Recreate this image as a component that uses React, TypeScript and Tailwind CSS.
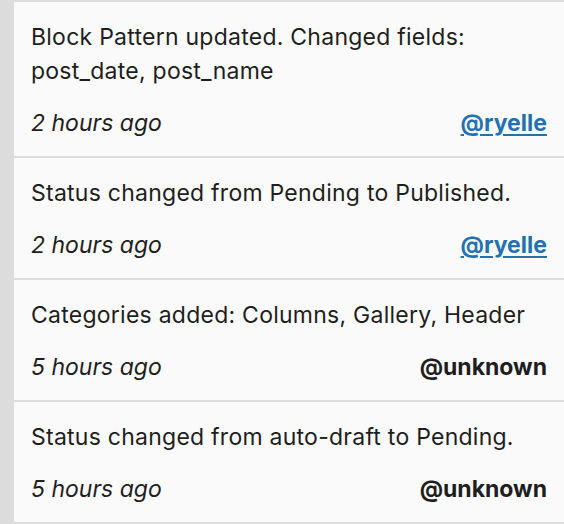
import React from "react";

type Item = { text: string; time: string; user: string; link: boolean };

const items: Item[] = [
  { text: "Block Pattern updated. Changed fields: post_date, post_name", time: "2 hours ago", user: "@ryelle", link: true },
  { text: "Status changed from Pending to Published.", time: "2 hours ago", user: "@ryelle", link: true },
  { text: "Categories added: Columns, Gallery, Header", time: "5 hours ago", user: "@unknown", link: false },
  { text: "Status changed from auto-draft to Pending.", time: "5 hours ago", user: "@unknown", link: false },
];

export default function App() {
  return (
    <div
      className="w-[564px] h-[524px] bg-[#dcdcdc] pl-[14px] pt-[2px] flex flex-col gap-[2px] overflow-hidden text-[#1e1e1e]"
      style={{ fontFamily: "Inter, 'Noto Sans', sans-serif" }}
    >
      {items.map((it, i) => (
        <div key={i} className="bg-[#fafafa] px-[17px] pt-[18px] pb-[16px] flex flex-col gap-[18px]">
          <p className="text-[23px] leading-[34px] tracking-[0.25px] pr-[20px]">{it.text}</p>
          <div className="flex items-center justify-between text-[23px] leading-[34px]">
            <span className="italic">{it.time}</span>
            {it.link ? (
              <a href="#" className="font-bold text-[#2271b1] underline underline-offset-[3px]">{it.user}</a>
            ) : (
              <span className="font-bold">{it.user}</span>
            )}
          </div>
        </div>
      ))}
    </div>
  );
}
